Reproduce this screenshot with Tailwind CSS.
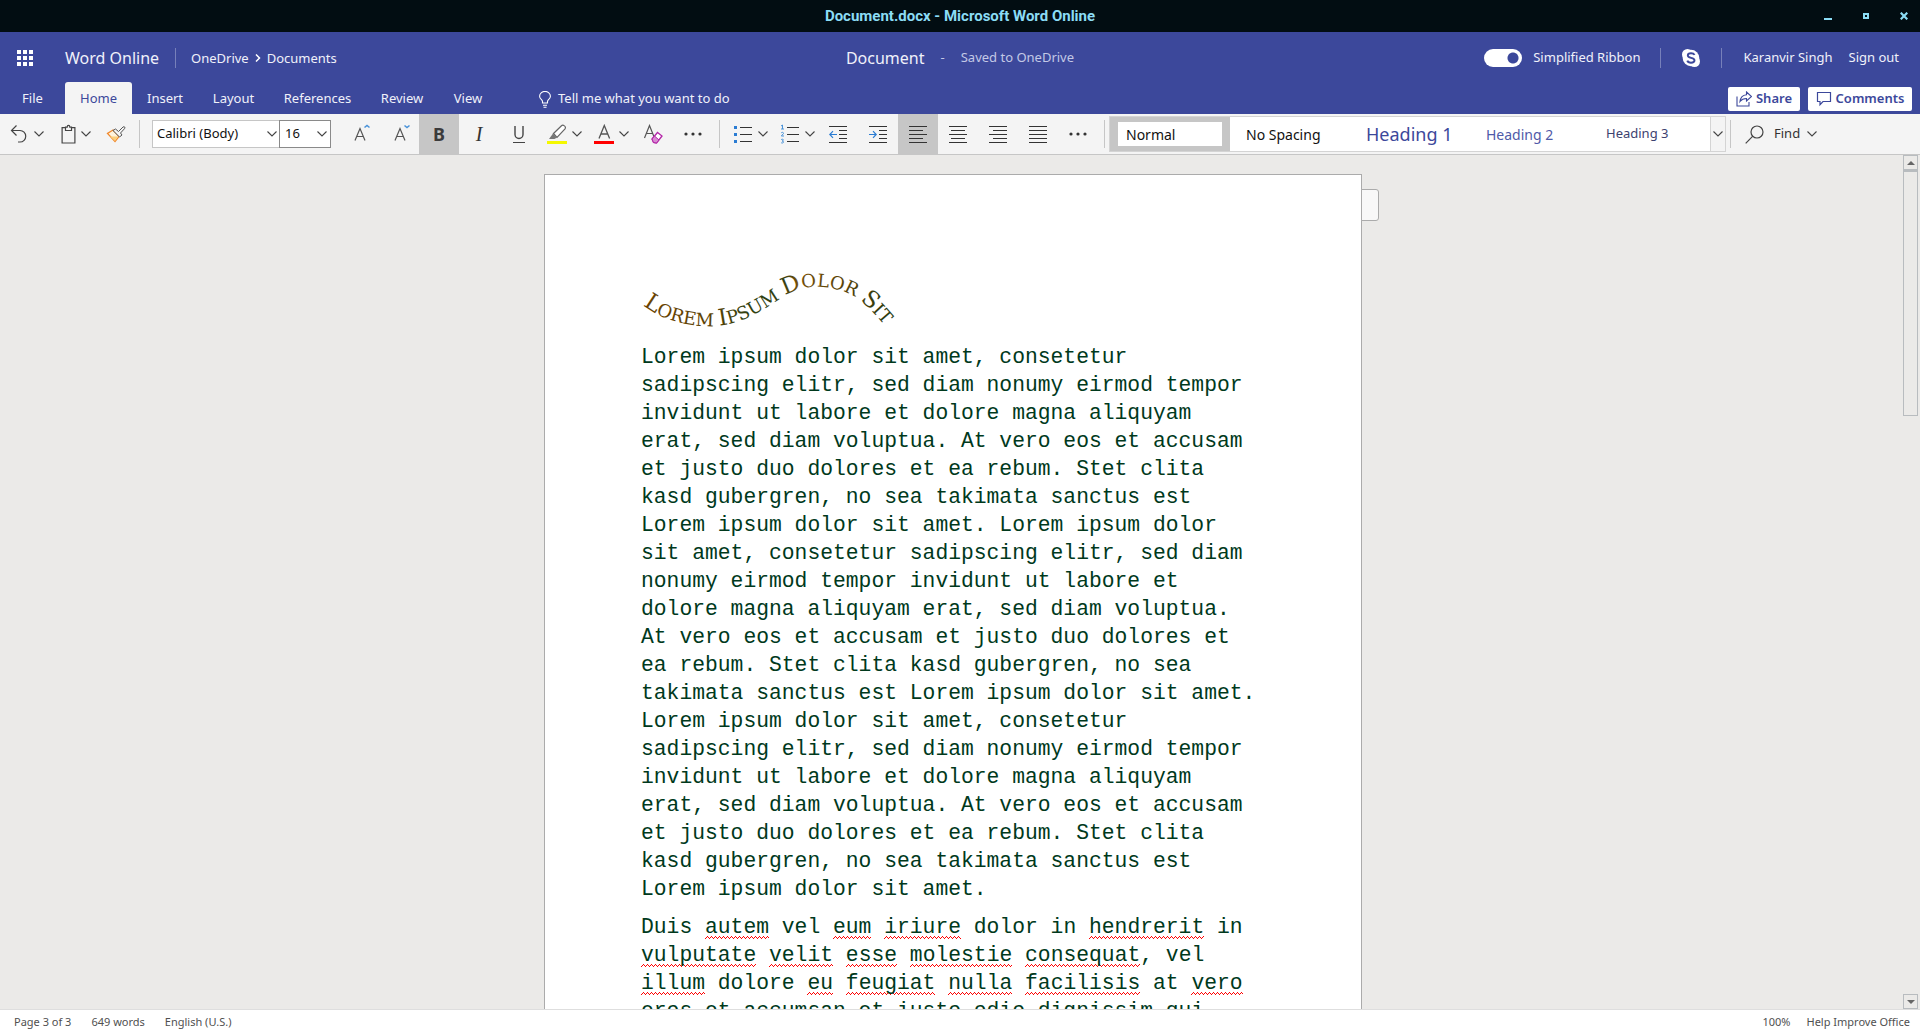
<!DOCTYPE html>
<html lang="en">
<head>
<meta charset="utf-8">
<title>Document.docx - Microsoft Word Online</title>
<script src="https://cdn.jsdelivr.net/npm/@tailwindcss/browser@4"></script>
</head>
<body class="flex h-screen flex-col overflow-hidden bg-[#ebeae8] font-['Noto_Sans',sans-serif] text-[13px] text-[#333]">
<svg class="hidden">
  <symbol id="chev" viewBox="0 0 10 6"><path d="M.5 .5 5 5 9.500 .5" fill="none" stroke="#444" stroke-width="1.100"/></symbol>
</svg>

<!-- Window title bar -->
<div class="grid h-8 shrink-0 grid-cols-[1fr_auto_1fr] items-center bg-[#020d12] text-[#8bdcf5]">
  <h1 class="col-start-2 pt-px font-['Roboto',sans-serif] text-[15px] font-bold">Document.docx - Microsoft Word Online</h1>
  <div class="flex justify-end gap-[18px] pr-[6px]">
    <button aria-label="Minimize" class="flex h-8 w-5 items-center justify-center"><svg width="8" height="8"><path d="M0 6h8v2H0z" fill="currentColor"/></svg></button>
    <button aria-label="Maximize" class="flex h-8 w-5 items-center justify-center"><svg width="6" height="6"><path d="M1 1h4v4H1z" fill="none" stroke="currentColor" stroke-width="2"/></svg></button>
    <button aria-label="Close" class="flex h-8 w-5 items-center justify-center"><svg width="8" height="8"><path d="M.7.700 7.300 7.300M7.300.7.700 7.300" stroke="currentColor" stroke-width="2.200"/></svg></button>
  </div>
</div>

<header class="shrink-0 bg-[#3c489b] text-[#f0f1fa]">
  <div class="grid h-[50px] grid-cols-[1fr_auto_1fr] items-center pt-px">
    <div class="flex items-center pl-[17px]">
      <button aria-label="App launcher"><svg width="16" height="16" fill="#fff"><path d="M0 0h4v4H0zM6 0h4v4H6zM12 0h4v4h-4zM0 6h4v4H0zM6 6h4v4H6zM12 6h4v4h-4zM0 12h4v4H0zM6 12h4v4H6zM12 12h4v4h-4z"/></svg></button>
      <a href="#" class="ml-8 w-[110px] text-[16px]">Word Online</a>
      <nav class="flex items-center gap-[6px] border-l border-[#7780ba] pl-[15px] leading-5" aria-label="Location">
        <a href="#">OneDrive</a>
        <svg width="6" height="8"><path d="M1 .5 4.500 4 1 7.500" fill="none" stroke="#fff" stroke-width="1.500"/></svg>
        <a href="#">Documents</a>
      </nav>
    </div>
    <div class="flex items-center"><span class="text-[16px]">Document</span><span class="mx-4 text-[#c3c8e6]">-</span><span class="text-[#c3c8e6]">Saved to OneDrive</span></div>
    <div class="flex items-center justify-end pr-[21px]">
      <label class="flex items-center gap-[11px]">
        <input type="checkbox" checked class="h-[18px] w-[38px] appearance-none rounded-full bg-[radial-gradient(circle_at_29px_9px,#3c489b_5px,#fff_6px)]">
        Simplified Ribbon
      </label>
      <span class="ml-5 h-5 w-px bg-[#7780ba]"></span>
      <button aria-label="Skype" class="mx-[21px]"><svg width="18" height="18" viewBox="0 0 18 18"><circle cx="5.500" cy="5.500" r="5.500" fill="#fff"/><circle cx="12.500" cy="12.500" r="5.500" fill="#fff"/><circle cx="9" cy="9" r="8.300" fill="#fff"/><path d="M12.600 5.900C11.900 4.600 10.500 4.200 9 4.200c-2 0-3.200.9-3.200 2.200 0 3.300 6.700 1.500 6.700 4.900 0 1.500-1.500 2.400-3.500 2.400-1.800 0-3.200-.6-3.700-2.100" fill="none" stroke="#3c489b" stroke-width="1.900"/></svg></button>
      <span class="mr-[21px] h-5 w-px bg-[#7780ba]"></span>
      <a href="#" class="mr-4">Karanvir Singh</a>
      <a href="#">Sign out</a>
    </div>
  </div>
  <div class="flex h-8 items-stretch pr-2 pl-[7px]">
    <button class="mr-[7px] w-[51px] pt-px">File</button>
    <button class="w-[67px] rounded-t-[3px] bg-[#f4f4f4] pt-px text-[#3c489b]">Home</button>
    <button class="w-[66px] pt-px">Insert</button>
    <button class="w-[71px] pt-px">Layout</button>
    <button class="w-[97px] pt-px">References</button>
    <button class="w-[72px] pt-px">Review</button>
    <button class="w-[60px] pt-px">View</button>
    <button class="ml-[41px] flex items-center gap-[7px] pt-[2px]">
      <svg width="12" height="17" fill="none" stroke="#fff" stroke-width="1.100"><path d="M3.500 12v-1.500C3.500 8.500.6 8.200.6 5.200a5.300 4.700 0 0 1 10.800 0c0 3-2.900 3.300-2.900 5.300V12zM4 14.200h4M4.500 16.200h3"/></svg>
      Tell me what you want to do
    </button>
    <div class="ml-auto flex items-center gap-2 pt-px font-semibold text-[#3c489b]">
      <button class="flex h-6 w-[72px] items-center justify-center gap-1 rounded-[2px] bg-white"><svg width="16" height="16" fill="none" stroke="currentColor" stroke-width="1.100"><path d="M1 5.500V15h12v-4M10.500 1 15.500 5.500l-5 4.500V7.500C7 7.500 5.500 8.500 4 10.500 4.500 6.500 6.500 4 10.500 3.700z"/></svg>Share</button>
      <button class="flex h-6 w-[104px] items-center justify-center gap-1 rounded-[2px] bg-white"><svg width="16" height="16" fill="none" stroke="currentColor" stroke-width="1.200"><path d="M1.500 1.500h13v9H7L4 13.700v-3.200H1.500z"/></svg>Comments</button>
    </div>
  </div>
</header>

<!-- Simplified ribbon -->
<div role="toolbar" aria-label="Home ribbon" class="flex h-[41px] shrink-0 items-stretch border-b border-[#c6c6c6] bg-[#f4f4f4]">
  <button aria-label="Undo" class="ml-2 flex w-[40px] items-center gap-[6px]"><svg class="shrink-0" width="20" height="20" fill="none" stroke="#444" stroke-width="1.200"><path d="M8.500 1.500 3.500 6.500l5 5M3.500 6.500H12a5.500 5.500 0 0 1 0 11.500h-2"/></svg><svg class="h-[6px] w-[10px] shrink-0"><use href="#chev"/></svg></button>
  <button aria-label="Paste" class="ml-2 flex w-[38px] items-center gap-[3px] pl-1"><svg class="shrink-0" width="18" height="20" fill="none" stroke="#444" stroke-width="1.200"><path d="M5.500 3.600H2.100V19h12.800V3.600h-3.400M5.500 6.500V3.200h1.700a1.300 1.800 0 0 1 2.600 0h1.700v3.300z"/></svg><svg class="h-[6px] w-[10px] shrink-0"><use href="#chev"/></svg></button>
  <button aria-label="Format painter" class="ml-2 flex w-[28px] items-center justify-center"><svg width="20" height="19" viewBox="0 0 20 19"><path d="M7 5 1.500 8.500 9 16.500 13 11.500z" fill="#fff3dc" stroke="#f0882b" stroke-width="1.300"/><path d="M4 11.500h8.500L9 16z" fill="#fbcf7d"/><path d="M7 5.500 9.500 4l3 2.500L17 2c1.500-1 2.500.5 1.500 1.700L14.500 8l1.500 2-2.500 2z" fill="#f4f4f4" stroke="#555"/></svg></button>
  <span class="mt-[6px] mr-3 ml-[9px] h-7 w-px bg-[#c6c6c6]"></span>
  <div class="relative mt-[6px] h-7 w-[128px] text-[#111]">
    <select aria-label="Font" class="h-7 w-full appearance-none border border-[#c6c6c6] bg-white pl-1"><option>Calibri (Body)</option></select>
    <svg class="pointer-events-none absolute top-[11px] right-[3px] h-[6px] w-[10px]"><use href="#chev"/></svg>
  </div>
  <div class="relative mt-[6px] -ml-px h-7 w-[52px] text-[#111]">
    <select aria-label="Font size" class="h-7 w-full appearance-none border border-[#8a8a8a] bg-white pl-[5px]"><option>16</option></select>
    <svg class="pointer-events-none absolute top-[11px] right-[4px] h-[6px] w-[10px]"><use href="#chev"/></svg>
  </div>
  <button aria-label="Grow font" class="ml-2 flex w-10 items-center justify-end pr-2"><svg width="18" height="20" fill="none"><path d="m2 16.500 5-12 5 12M4 12.500h6" stroke="#555" stroke-width="1.200"/><path d="m11.500 3.500 2.500-2 2.500 2" stroke="#4a93d9" stroke-width="1.600"/></svg></button>
  <button aria-label="Shrink font" class="flex w-10 items-center justify-end pr-2"><svg width="18" height="20" fill="none"><path d="m2 16.500 5-12 5 12M4 12.500h6" stroke="#555" stroke-width="1.200"/><path d="m11.500 1.500 2.500 2 2.500-2" stroke="#4a93d9" stroke-width="1.600"/></svg></button>
  <button aria-label="Bold" aria-pressed="true" class="w-10 bg-[#c6c6c6] text-[18px] font-bold text-[#3b3b3b]">B</button>
  <button aria-label="Italic" class="w-10 font-['Liberation_Serif',serif] text-[20px] italic text-[#333]">I</button>
  <button aria-label="Underline" class="flex w-10 items-center justify-center"><svg width="14" height="20" fill="none" stroke="#444"><path d="M3 2v8.500a4 4 0 0 0 8 0V2" stroke-width="1.400"/><path d="M1 18.500h12"/></svg></button>
  <button aria-label="Text highlight color" class="ml-2 flex w-9 items-center gap-[5px]"><svg class="shrink-0" width="20" height="20"><path d="m6.500 9.500 8-7.700c1.500-1.500 5 .7 3.500 3l-8 8.500z" fill="#fff" stroke="#666" stroke-width="1.200"/><path d="m6 9.500 4 4-2.500 1.500H2z" fill="#777"/><path d="M0 17h20v3H0z" fill="#f4f800"/></svg><svg class="h-[6px] w-[10px] shrink-0"><use href="#chev"/></svg></button>
  <button aria-label="Font color" class="ml-[11px] flex w-9 items-center gap-[5px]"><svg class="shrink-0" width="20" height="20"><path d="m5 14.500 5.300-13 5.300 13M7 10h6.700" fill="none" stroke="#555" stroke-width="1.300"/><path d="M0 17h20v3H0z" fill="#f00"/></svg><svg class="h-[6px] w-[10px] shrink-0"><use href="#chev"/></svg></button>
  <button aria-label="Clear formatting" class="ml-[7px] flex w-8 items-center justify-center"><svg width="20" height="20" fill="none"><path d="m1.500 14 5-12.500 5 12.500M3.500 9.500h6" stroke="#555" stroke-width="1.200"/><path d="m9 15 5.500-6.500 4.500 3.500-5.500 7-3-.5z" fill="#fff" stroke="#b426a8" stroke-width="1.300"/><path d="m11.500 12 4.500 4-2.500 3-3-.5L9 15z" fill="#d88ad2" stroke="#b426a8"/></svg></button>
  <button aria-label="More font options" class="ml-[6px] flex w-9 items-center justify-center"><svg width="18" height="4" fill="#333"><circle cx="2" cy="2" r="1.600"/><circle cx="9" cy="2" r="1.600"/><circle cx="16" cy="2" r="1.600"/></svg></button>
  <span class="mt-[6px] ml-[8px] h-7 w-px bg-[#c6c6c6]"></span>
  <button aria-label="Bullets" class="ml-[14px] flex w-[34px] items-center gap-[6px]"><svg class="shrink-0" width="18" height="20"><path d="M0 2h3v3H0zM0 9h3v3H0zM0 16h3v3H0z" fill="#2b7cd3"/><path d="M6 3.500h12M6 10.500h12M6 17.500h12" stroke="#333"/></svg><svg class="h-[6px] w-[10px] shrink-0"><use href="#chev"/></svg></button>
  <button aria-label="Numbering" class="ml-[13px] flex w-[34px] items-center gap-[6px]"><svg class="shrink-0" width="18" height="20" fill="none"><path d="M0 2 1.500 1v4M0 5h3M.2 9c.5-1 2.600-.8 2.300.5L.3 12H3M.2 15.500c2.300-1 3.200 1 .8 1.500 2.800.3 1.500 2.700-.8 1.800" stroke="#4a93d9"/><path d="M6 3.500h12M6 10.500h12M6 17.500h12" stroke="#333"/></svg><svg class="h-[6px] w-[10px] shrink-0"><use href="#chev"/></svg></button>
  <button aria-label="Decrease indent" class="ml-[3px] flex w-10 items-center justify-center"><svg width="18" height="20" fill="none"><path d="M0 2.500h18M10 6.500h8M10 10.500h8M10 14.500h8M0 18.500h18" stroke="#333"/><path d="M8 10.500H1M4 7.200.8 10.500 4 13.800" stroke="#2b7cd3" stroke-width="1.200"/></svg></button>
  <button aria-label="Increase indent" class="flex w-10 items-center justify-center"><svg width="18" height="20" fill="none"><path d="M0 2.500h18M10 6.500h8M10 10.500h8M10 14.500h8M0 18.500h18" stroke="#333"/><path d="M0 10.500h7M4 7.200 7.200 10.500 4 13.800" stroke="#2b7cd3" stroke-width="1.200"/></svg></button>
  <button aria-label="Align left" aria-pressed="true" class="flex w-10 items-center justify-center bg-[#c6c6c6]"><svg width="18" height="20"><path d="M0 2.500h18M0 6.500h14M0 10.500h18M0 14.500h14M0 18.500h18" stroke="#333"/></svg></button>
  <button aria-label="Center" class="flex w-10 items-center justify-center"><svg width="18" height="20"><path d="M0 2.500h18M2 6.500h14M0 10.500h18M2 14.500h14M0 18.500h18" stroke="#333"/></svg></button>
  <button aria-label="Align right" class="flex w-10 items-center justify-center"><svg width="18" height="20"><path d="M0 2.500h18M4 6.500h14M0 10.500h18M4 14.500h14M0 18.500h18" stroke="#333"/></svg></button>
  <button aria-label="Justify" class="flex w-10 items-center justify-center"><svg width="18" height="20"><path d="M0 2.500h18M0 6.500h18M0 10.500h18M0 14.500h18M0 18.500h18" stroke="#333"/></svg></button>
  <button aria-label="More paragraph options" class="flex w-10 items-center justify-center"><svg width="18" height="4" fill="#333"><circle cx="2" cy="2" r="1.600"/><circle cx="9" cy="2" r="1.600"/><circle cx="16" cy="2" r="1.600"/></svg></button>
  <span class="mt-[6px] mr-1 ml-[6px] h-7 w-px bg-[#c6c6c6]"></span>
  <div class="my-[2px] flex items-stretch border border-[#d4d4d4] bg-white text-left text-[#111]">
    <button class="w-[120px] bg-[#c6c6c6] px-2 py-[5px] text-left"><span class="flex h-6 items-center bg-white pl-2 text-[14px]">Normal</span></button>
    <button class="w-[120px] pl-4 text-left text-[14px]">No Spacing</button>
    <button class="w-[120px] pl-4 text-left text-[18px] text-[#3c489b]">Heading 1</button>
    <button class="w-[120px] pl-4 text-left text-[14px] text-[#4f5aa8]">Heading 2</button>
    <button class="w-[120px] pl-4 text-left text-[13px] text-[#3d426f]">Heading 3</button>
    <button aria-label="More styles" class="flex w-[15px] items-center justify-center border-l border-[#d4d4d4] bg-[#f4f4f4]"><svg class="h-[6px] w-[10px]"><use href="#chev"/></svg></button>
  </div>
  <span class="mt-[6px] ml-1 h-7 w-px bg-[#c6c6c6]"></span>
  <button class="ml-[14px] flex items-center"><svg class="mr-[10px]" width="19" height="19" fill="none" stroke="#444" stroke-width="1.200"><circle cx="12" cy="7" r="6"/><path d="M7.800 11.200.7 18.300"/></svg>Find<svg class="ml-[7px] h-[6px] w-[10px]"><use href="#chev"/></svg></button>
</div>

<div class="flex min-h-0 flex-1">
  <main class="flex flex-1 justify-center overflow-hidden pt-[19px] pl-[3px]">
    <article class="relative h-[1058px] w-[818px] border border-[#ababab] bg-white px-24 pt-24 font-['Liberation_Mono',monospace] text-[16pt] leading-7 text-[#00391c]">
      <button aria-label="Comments on this page" class="absolute top-[14px] left-full h-8 w-[18px] rounded-r-[3px] border border-[#ababab] bg-[#f8f8f8]"></button>
      <h2><svg role="img" aria-label="Lorem Ipsum Dolor Sit" width="270" height="72" viewBox="641 271 270 72" class="block font-['DejaVu_Serif',serif] text-[18px]">
        <defs>
          <path id="wave" d="M643 305C663 321 690 327 715 326C745 324 765 308 786 295C800 287 815 285 830 288C855 292 868 305 890 332"/>
          <linearGradient id="ink" gradientUnits="userSpaceOnUse" x1="643" x2="893" y1="0" y2="0"><stop offset="0" stop-color="#6b4300"/><stop offset=".28" stop-color="#5a4204"/><stop offset=".42" stop-color="#30400f"/><stop offset=".56" stop-color="#334012"/><stop offset=".62" stop-color="#755008"/><stop offset=".8" stop-color="#5a4408"/><stop offset="1" stop-color="#263a10"/></linearGradient>
        </defs>
        <text fill="url(#ink)"><textPath href="#wave"><tspan font-size="23">L</tspan>OREM <tspan font-size="23">I</tspan>PSUM <tspan font-size="23">D</tspan>OLOR <tspan font-size="23">S</tspan>IT</textPath></text>
      </svg></h2>
      <p>Lorem ipsum dolor sit amet, consetetur sadipscing elitr, sed diam nonumy eirmod tempor invidunt ut labore et dolore magna aliquyam erat, sed diam voluptua. At vero eos et accusam et justo duo dolores et ea rebum. Stet clita kasd gubergren, no sea takimata sanctus est Lorem ipsum dolor sit amet. Lorem ipsum dolor sit amet, consetetur sadipscing elitr, sed diam nonumy eirmod tempor invidunt ut labore et dolore magna aliquyam erat, sed diam voluptua. At vero eos et accusam et justo duo dolores et ea rebum. Stet clita kasd gubergren, no sea takimata sanctus est Lorem ipsum dolor sit amet. Lorem ipsum dolor sit amet, consetetur sadipscing elitr, sed diam nonumy eirmod tempor invidunt ut labore et dolore magna aliquyam erat, sed diam voluptua. At vero eos et accusam et justo duo dolores et ea rebum. Stet clita kasd gubergren, no sea takimata sanctus est Lorem ipsum dolor sit amet.</p>
      <p class="mt-[10px] [&_u]:bg-[url('data:image/svg+xml,%3Csvg%20xmlns=%22http://www.w3.org/2000/svg%22%20width=%224%22%20height=%223%22%3E%3Cpath%20d=%22M0%202h1v1H0zM1%201h1v1H1zM2%200h1v1H2zM3%201h1v1H3z%22%20fill=%22red%22/%3E%3C/svg%3E')] [&_u]:bg-bottom-left [&_u]:bg-repeat-x [&_u]:no-underline">Duis <u>autem</u> vel <u>eum</u> <u>iriure</u> dolor in <u>hendrerit</u> in <u>vulputate</u> <u>velit</u> <u>esse</u> <u>molestie</u> <u>consequat</u>, vel <u>illum</u> dolore <u>eu</u> <u>feugiat</u> <u>nulla</u> <u>facilisis</u> at <u>vero</u> eros et accumsan et iusto odio dignissim qui</p>
    </article>
  </main>
  <!-- Scroll bar -->
  <div class="mr-[2px] flex w-[15px] shrink-0 flex-col">
    <button aria-label="Scroll up" class="flex h-[15px] items-center justify-center border border-[#b8bcbf]"><svg width="8" height="4"><path d="M4 0 8 4H0z" fill="#666"/></svg></button>
    <div class="h-[246px] border border-t-2 border-[#b8bcbf] bg-[#ebeae8]"></div>
    <button aria-label="Scroll down" class="mt-auto flex h-[15px] items-center justify-center border border-[#b8bcbf]"><svg width="8" height="4"><path d="M4 4 0 0h8z" fill="#666"/></svg></button>
  </div>
</div>

<footer class="flex h-[23px] shrink-0 items-center gap-5 border-t border-[#dedede] bg-white pt-[2px] pr-[10px] pl-[14px] text-[11px] text-[#505050]">
  <span>Page 3 of 3</span><span>649 words</span><span>English (U.S.)</span>
  <span class="ml-auto">100%</span><a href="#" class="-ml-1">Help Improve Office</a>
</footer>
</body>
</html>
